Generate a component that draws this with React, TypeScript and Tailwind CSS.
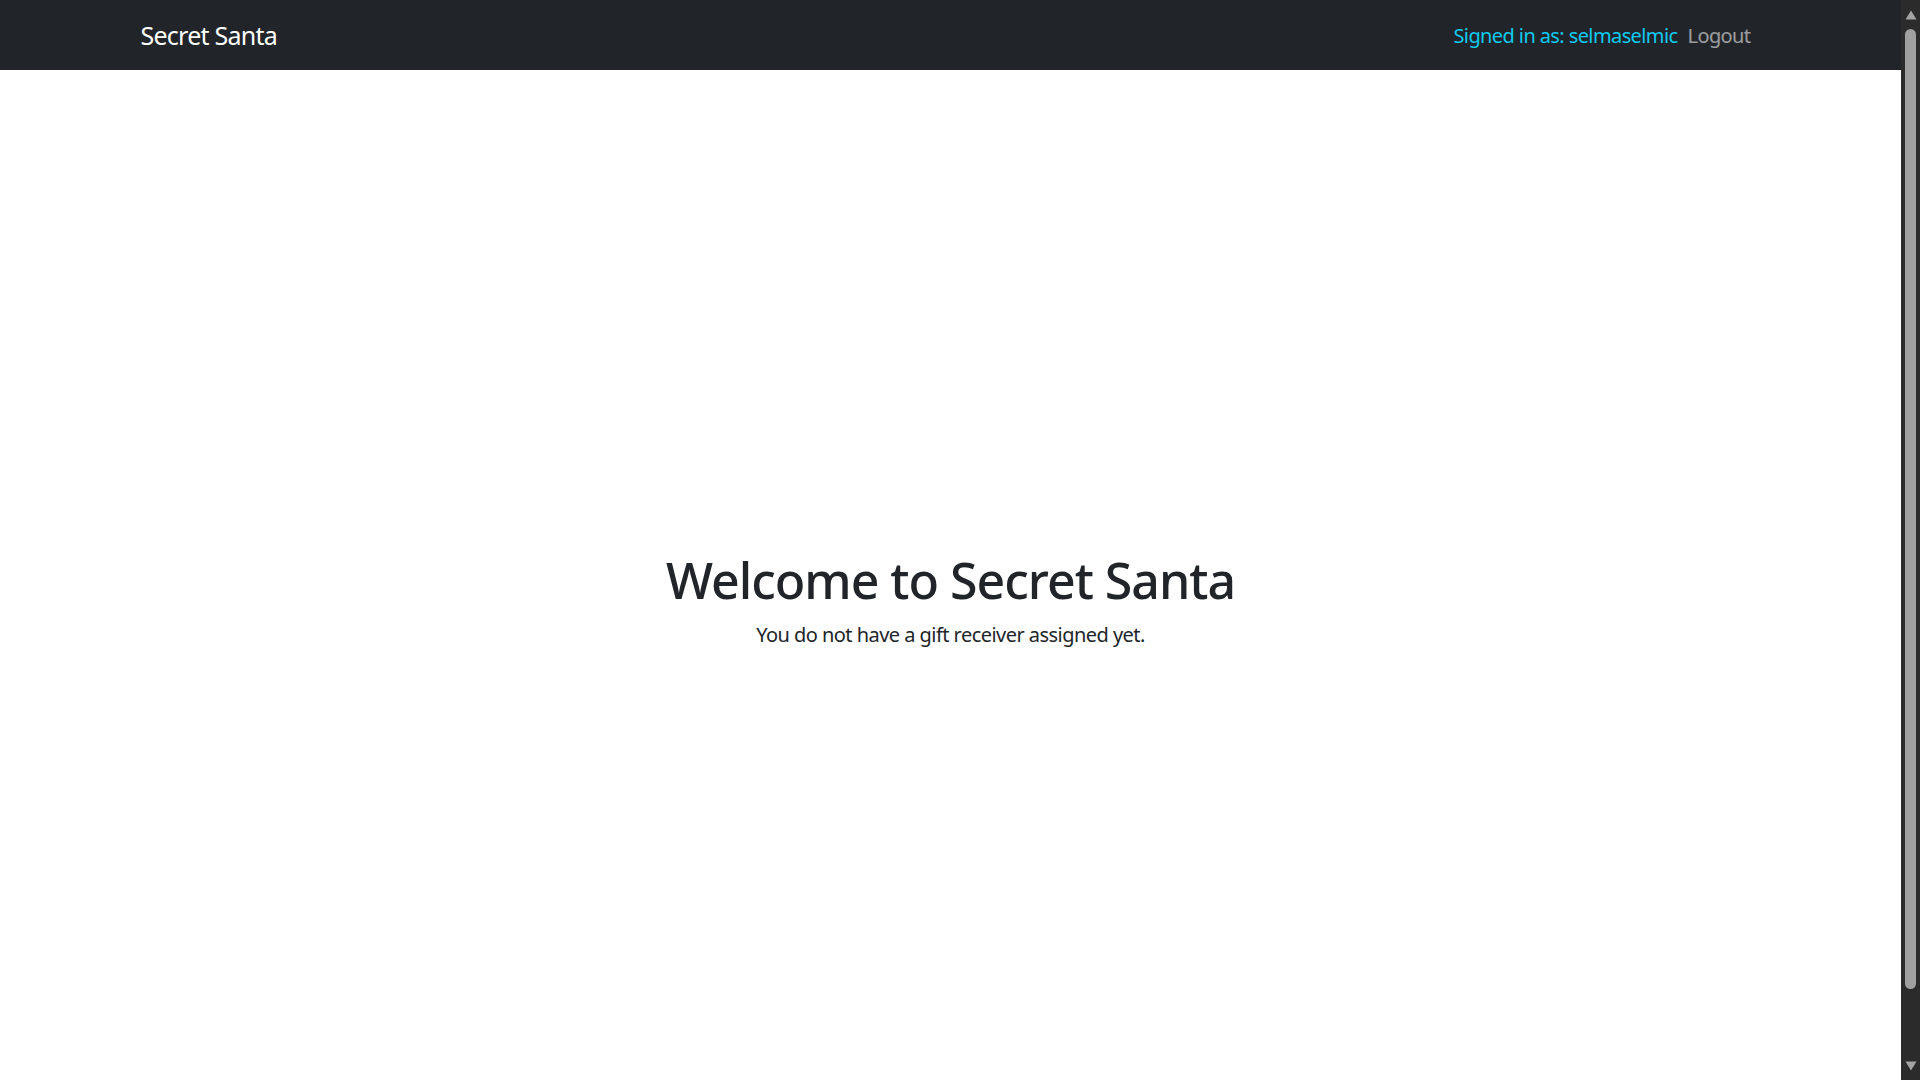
import React from 'react';

const font = { fontFamily: '"Segoe UI", "Noto Sans", "Open Sans", sans-serif' };

// Classic scrollbar drawn at the right edge, as in the screenshot
const Scrollbar = () => (
  <div className="flex w-[19px] shrink-0 flex-col items-center bg-[#2b2b2b] pt-[10px] pb-[9px]">
    <svg width="12" height="10" viewBox="0 0 12 10">
      <path d="M6 0.5 L11.5 9.5 L0.5 9.5 Z" fill="#a3a3a3" />
    </svg>
    <div className="mt-[9px] h-[960px] w-[11px] rounded-full bg-[#a0a0a0]" />
    <div className="flex-1" />
    <svg width="12" height="10" viewBox="0 0 12 10">
      <path d="M0.5 0.5 L11.5 0.5 L6 9.5 Z" fill="#a3a3a3" />
    </svg>
  </div>
);

const App = () => {
  return (
    <div className="flex h-screen w-full overflow-hidden bg-white" style={font}>
      <div className="flex min-w-0 flex-1 flex-col">
        {/* Navbar */}
        <nav className="h-[70px] shrink-0 bg-[#212529]">
          <div className="mx-auto flex h-full max-w-[1650px] items-center justify-between px-[15px] pt-[2px]">
            <a href="#" className="text-[25px] leading-[1.5] tracking-[-0.03em] text-white">
              Secret Santa
            </a>
            <div className="flex items-center text-[20px] leading-[1.5] tracking-[-0.03em]">
              <span className="text-[#0dcaf0]">Signed in as: selmaselmic</span>
              <a href="#" className="px-[10px] text-white/55">
                Logout
              </a>
            </div>
          </div>
        </nav>

        {/* Welcome */}
        <main className="flex flex-col items-center pt-[480px] text-[#212529]">
          <h1 className="mb-[10px] text-[50px] font-medium leading-[1.2] tracking-[-0.02em]">
            Welcome to Secret Santa
          </h1>
          <p className="text-[20px] leading-[1.5] tracking-[-0.027em]">You do not have a gift receiver assigned yet.</p>
        </main>
      </div>
      <Scrollbar />
    </div>
  );
};

export default App;
